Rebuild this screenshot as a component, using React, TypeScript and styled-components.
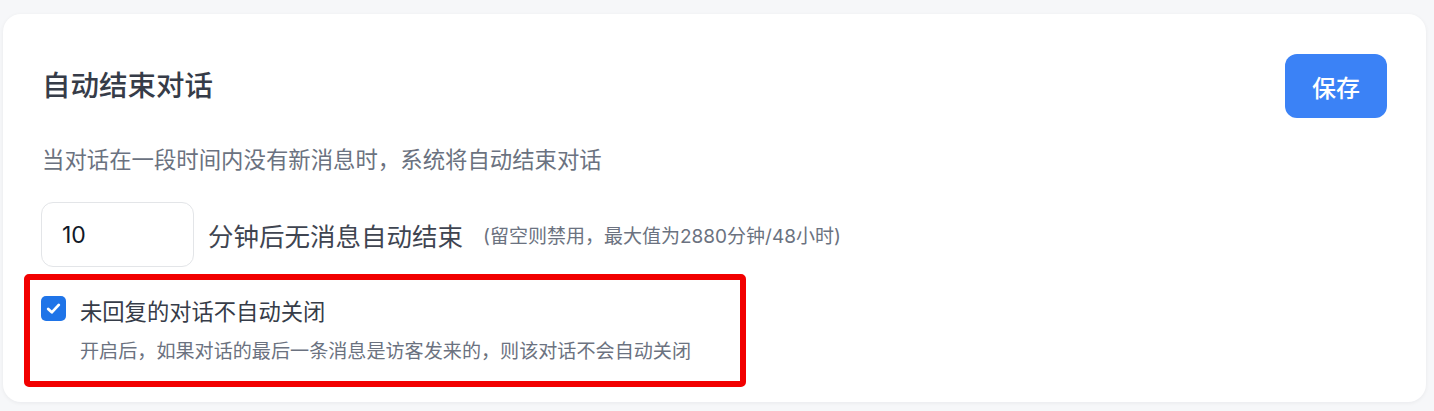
import React, { useState } from "react";
import styled, { createGlobalStyle } from "styled-components";

const GlobalStyle = createGlobalStyle`
  html, body {
    margin: 0;
    padding: 0;
    background: #f6f7f9;
    font-family: Inter, "Noto Sans CJK SC", sans-serif;
  }
`;

const Page = styled.div`
  padding: 14px 8px 9px 3px;
`;

const Card = styled.section`
  background: #ffffff;
  border-radius: 18px;
  box-shadow: 0 1px 4px rgba(15, 23, 42, 0.06);
  padding: 40px 39px 15px 39px;
`;

const Header = styled.div`
  display: flex;
  align-items: center;
  justify-content: space-between;
`;

const Title = styled.h2`
  margin: 0;
  font-size: 28.5px;
  font-weight: 500;
  color: #363c48;
  line-height: 40px;
`;

const SaveButton = styled.button`
  width: 102px;
  height: 64px;
  border: 0;
  border-radius: 12px;
  background: #3b82f6;
  color: #ffffff;
  font-family: inherit;
  font-size: 24px;
  font-weight: 500;
  cursor: pointer;
`;

const Description = styled.p`
  margin: 26px 0 0 0;
  font-size: 22.4px;
  line-height: 32px;
  color: #6b7280;
`;

const InputRow = styled.div`
  display: flex;
  align-items: center;
  margin-top: 26px;
  margin-left: -1px;
`;

const NumberInput = styled.input`
  box-sizing: border-box;
  width: 153px;
  height: 65px;
  border: 1.5px solid #e3e5e8;
  border-radius: 12px;
  padding: 0 20px;
  font-family: inherit;
  font-size: 23px;
  color: #111827;
  outline: none;
`;

const UnitText = styled.span`
  margin-left: 14px;
  font-size: 25.5px;
  color: #3f4551;
`;

const Hint = styled.span`
  margin-left: 20px;
  font-size: 19px;
  color: #6b7280;
`;

const Highlight = styled.div`
  box-sizing: border-box;
  width: 722px;
  margin: 7px 0 0 -18px;
  border: 6px solid #f20000;
  border-radius: 5px;
  padding: 16px 11px 16px 11px;
`;

const CheckRow = styled.label`
  display: flex;
  align-items: flex-start;
  gap: 14px;
  cursor: pointer;
`;

const Box = styled.span<{ $checked: boolean }>`
  flex: none;
  width: 25px;
  height: 25px;
  border-radius: 5px;
  background: ${(p) => (p.$checked ? "#1f74e8" : "#ffffff")};
  border: ${(p) => (p.$checked ? "none" : "2px solid #767676")};
  box-sizing: border-box;
  display: flex;
  align-items: center;
  justify-content: center;
`;

const CheckText = styled.div`
  display: flex;
  flex-direction: column;
`;

const CheckLabel = styled.span`
  font-size: 22.3px;
  line-height: 32px;
  color: #363c48;
`;

const CheckSub = styled.span`
  margin-top: 9px;
  font-size: 19.1px;
  line-height: 28px;
  color: #6b7280;
`;

export default function App() {
  const [minutes, setMinutes] = useState("10");
  const [keepOpen, setKeepOpen] = useState(true);

  return (
    <Page>
      <GlobalStyle />
      <Card>
        <Header>
          <Title>自动结束对话</Title>
          <SaveButton>保存</SaveButton>
        </Header>
        <Description>当对话在一段时间内没有新消息时，系统将自动结束对话</Description>
        <InputRow>
          <NumberInput value={minutes} onChange={(e) => setMinutes(e.target.value)} />
          <UnitText>分钟后无消息自动结束</UnitText>
          <Hint>(留空则禁用，最大值为2880分钟/48小时)</Hint>
        </InputRow>
        <Highlight>
          <CheckRow onClick={() => setKeepOpen(!keepOpen)}>
            <Box $checked={keepOpen}>
              {keepOpen && (
                <svg width="17" height="17" viewBox="0 0 16 16">
                  <path d="M3 8.4 L6.4 11.6 L13 4.6" fill="none" stroke="#fff" strokeWidth="2.6" strokeLinecap="round" strokeLinejoin="round" />
                </svg>
              )}
            </Box>
            <CheckText>
              <CheckLabel>未回复的对话不自动关闭</CheckLabel>
              <CheckSub>开启后，如果对话的最后一条消息是访客发来的，则该对话不会自动关闭</CheckSub>
            </CheckText>
          </CheckRow>
        </Highlight>
      </Card>
    </Page>
  );
}
